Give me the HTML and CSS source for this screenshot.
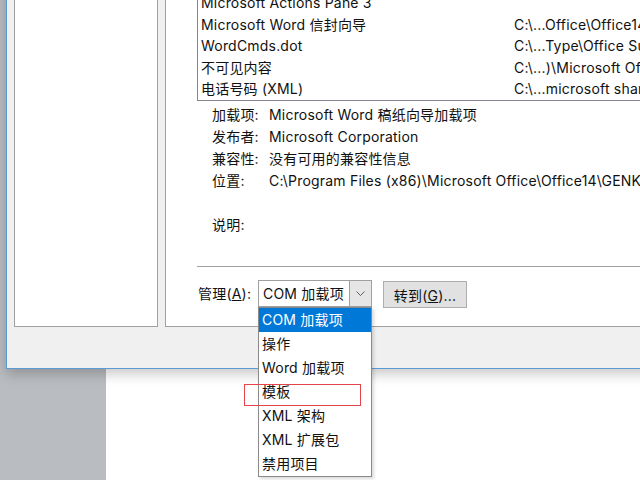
FILE: index.html
```html
<!DOCTYPE html>
<html lang="zh-CN">
<head>
<meta charset="utf-8">
<title>COM 加载项</title>
<link rel="stylesheet" href="styles.css">
</head>
<body>
<div class="desktop">
  <div class="window">
    <div class="panes">
      <div class="left-pane"></div>
      <div class="right-pane">
        <div class="addin-list">
          <div class="cell">Microsoft Actions Pane 3</div><div class="cell"></div>
          <div class="cell">Microsoft Word 信封向导</div><div class="cell">C:\...Office\Office14\ENVELOPR.DLL</div>
          <div class="cell">WordCmds.dot</div><div class="cell">C:\...Type\Office Supplements</div>
          <div class="cell">不可见内容</div><div class="cell">C:\...)\Microsoft Office</div>
          <div class="cell">电话号码 (XML)</div><div class="cell">C:\...microsoft shared\Smart Tag</div>
        </div>
        <div class="details">
          <div class="label">加载项:</div><div class="value">Microsoft Word 稿纸向导加载项</div>
          <div class="label">发布者:</div><div class="value">Microsoft Corporation</div>
          <div class="label">兼容性:</div><div class="value">没有可用的兼容性信息</div>
          <div class="label">位置:</div><div class="value">C:\Program Files (x86)\Microsoft Office\Office14\GENKO.DLL</div>
          <div class="label"></div><div class="value"></div>
          <div class="label">说明:</div><div class="value"></div>
        </div>
        <div class="separator"></div>
        <div class="manage-row">
          <span class="manage-label">管理(<u>A</u>):</span>
          <div class="combo">
            <span class="combo-text">COM 加载项</span>
            <span class="combo-button">
              <svg width="9" height="5" viewBox="0 0 9 5"><polyline points="0.5,0.5 4.5,4.5 8.5,0.5" fill="none" stroke="#606060" stroke-width="1"/></svg>
            </span>
            <ul class="dropdown">
              <li class="selected">COM 加载项</li>
              <li>操作</li>
              <li>Word 加载项</li>
              <li>模板</li>
              <li>XML 架构</li>
              <li>XML 扩展包</li>
              <li>禁用项目</li>
            </ul>
          </div>
          <button class="goto">转到(<u>G</u>)...</button>
        </div>
      </div>
    </div>
  </div>
  <div class="below">
    <div class="gray-strip"></div>
    <div class="page"></div>
  </div>
  <div class="highlight"></div>
</div>
</body>
</html>
```

FILE: styles.css
```css
* { box-sizing: border-box; }
html, body { margin: 0; padding: 0; }
body {
  font-family: "Inter", "Noto Sans CJK SC", sans-serif;
  font-size: 14px;
  letter-spacing: 0.2px;
  color: #111;
}
.desktop {
  position: relative;
  width: 640px;
  height: 480px;
  overflow: hidden;
  background: #b9bcc0;
}
.window {
  position: relative;
  z-index: 1;
  margin-top: -30px;
  margin-left: 6px;
  width: 700px;
  height: 399px;
  background: #f0f0f0;
  border-left: 1px solid #5b9bd5;
  border-bottom: 1px solid #5b9bd5;
  padding-left: 7px;
  box-shadow: 0 5px 12px rgba(0,0,0,0.22);
}
.panes {
  display: flex;
  gap: 7px;
  height: 357px;
}
.left-pane {
  width: 144px;
  background: #fff;
  border: 1px solid #a0a0a0;
}
.right-pane {
  flex: 1;
  background: #fff;
  border: 1px solid #a0a0a0;
}
.addin-list {
  margin: 20px 0 0 31px;
  border: 1px solid #828790;
  display: grid;
  grid-template-columns: 316px 1fr;
  grid-auto-rows: 21.5px;
  line-height: 21.5px;
  white-space: nowrap;
}
.addin-list .cell { padding-left: 3px; overflow: hidden; }
.addin-list .cell:nth-child(even) { padding-left: 0; }
.details {
  margin-top: 3.5px;
  padding-left: 46px;
  display: grid;
  grid-template-columns: 57px 1fr;
  grid-auto-rows: 22px;
  line-height: 22px;
  white-space: nowrap;
}
.separator {
  margin: 30px 0 0 31px;
  height: 1px;
  background: #a0a0a0;
}
.manage-row {
  display: flex;
  align-items: flex-start;
  margin-top: 13px;
  padding-left: 32px;
}
.manage-label {
  width: 60px;
  line-height: 27px;
  white-space: nowrap;
}
.combo {
  position: relative;
  display: flex;
  width: 114px;
  height: 27px;
  border: 1px solid #a0a0a0;
  background: #fff;
}
.combo-text {
  flex: 1;
  padding-left: 4px;
  line-height: 25px;
  white-space: nowrap;
}
.combo-button {
  width: 22px;
  background: #e6e6e6;
  border-left: 1px solid #a0a0a0;
  display: flex;
  align-items: center;
  justify-content: center;
}
.dropdown {
  position: absolute;
  top: 26px;
  left: -1px;
  width: 114px;
  margin: 0;
  padding: 0;
  list-style: none;
  background: #fff;
  border: 1px solid #8a8a8a;
  box-shadow: 2px 2px 3px rgba(0,0,0,0.15);
}
.dropdown li {
  height: 24px;
  line-height: 24px;
  padding-left: 3px;
  white-space: nowrap;
}
.dropdown li.selected {
  background: #0078d7;
  color: #fff;
}
.goto {
  margin: 1px 0 0 11px;
  width: 84px;
  height: 27px;
  padding: 0;
  font: inherit;
  letter-spacing: inherit;
  color: #111;
  background: #e1e1e1;
  border: 1px solid #adadad;
}
.below {
  display: flex;
  height: 111px;
}
.gray-strip {
  width: 106px;
}
.page {
  flex: 1;
  background: #fff;
}
.highlight {
  position: absolute;
  left: 244px;
  top: 384px;
  width: 117px;
  height: 22px;
  border: 1px solid #e5454a;
  z-index: 2;
}
```
